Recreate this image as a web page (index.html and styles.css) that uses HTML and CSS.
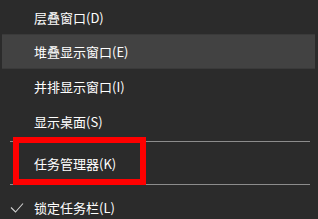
FILE: index.html
```html
<!DOCTYPE html>
<html lang="zh-CN">
<head>
  <meta charset="UTF-8" />
  <title>任务栏菜单</title>
  <link rel="stylesheet" href="styles.css">
</head>
<body>
  <div class="menu">
    <div class="item first">层叠窗口(D)</div>
    <div class="item hover">堆叠显示窗口(E)</div>
    <div class="item">并排显示窗口(I)</div>
    <div class="item">显示桌面(S)</div>
    <div class="sep"></div>
    <div class="item tall">任务管理器(K)</div>
    <div class="sep"></div>
    <div class="item last">
      <svg class="check" width="14" height="12" viewBox="0 0 14 12">
        <polyline points="1,5.5 5.5,10 13,1.5" fill="none" stroke="#d0d0d0" stroke-width="1.1" />
      </svg>
      锁定任务栏(L)
    </div>
    <div class="highlight"></div>
  </div>
</body>
</html>
```

FILE: styles.css
```css
body {
  margin: 0;
  background-color: #2b2b2b;
  font-family: "Noto Sans CJK SC", "Microsoft YaHei", sans-serif;
  font-size: 13px;
  color: #ffffff;
  overflow: hidden;
}

.menu {
  position: relative;
  display: flex;
  flex-direction: column;
  width: 318px;
  height: 219px;
}

.item {
  display: flex;
  align-items: center;
  height: 35px;
  padding-left: 34px;
  flex-shrink: 0;
  position: relative;
}

.item.first {
  height: 34px;
}

.item.hover {
  background-color: #424242;
  margin: 0 3px 0 2px;
  padding-left: 32px;
  box-shadow: inset 0 1px 0 #3a3a3a, inset 0 -1px 0 #3a3a3a;
}

.item.tall {
  height: 38px;
}

.item.last {
  height: 40px;
}

.sep {
  height: 1px;
  margin: 2px 8px 2px 10px;
  background-color: #8c8c8c;
  flex-shrink: 0;
}

.check {
  position: absolute;
  left: 10px;
  top: 15px;
}

.highlight {
  position: absolute;
  left: 13px;
  top: 137px;
  width: 121px;
  height: 36px;
  border: 6px solid #ff0000;
}
```
